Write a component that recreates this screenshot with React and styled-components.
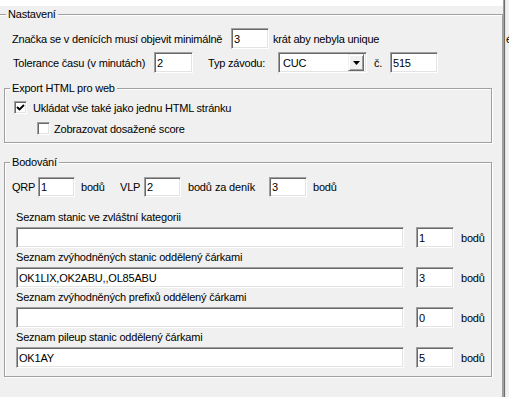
import React from "react";
import styled, { createGlobalStyle } from "styled-components";

const Global = createGlobalStyle`
  html, body { margin: 0; padding: 0; background: #f0f0f0; overflow: hidden; }
  body { font-family: "Liberation Sans", Arial, sans-serif; font-size: 11px; letter-spacing: -0.2px; color: #000; }
  #root { width: 509px; height: 397px; }
`;

const Page = styled.div`
  display: flex;
  width: 509px;
  height: 397px;
  overflow: hidden;
`;

const Main = styled.div`
  width: 503px;
  flex: none;
  display: flex;
  flex-direction: column;
  overflow: hidden;
`;

const TopStrip = styled.div`
  height: 6px;
  flex: none;
  background: #fff;
`;

const WindowEdge = styled.div`
  width: 3px;
  flex: none;
  background: linear-gradient(to right, #a0a0a0 0 1px, #6d6d6d 1px 2px, #e3e3e3 2px 3px);
`;

const Side = styled.div`
  flex: 1;
  overflow: hidden;
  padding-top: 33px;
  line-height: 13px;
`;

const SideGlyph = styled.span`
  display: block;
  width: 3px;
  overflow: hidden;
  white-space: nowrap;
`;

const Group = styled.fieldset`
  box-sizing: border-box;
  margin: ${(p) => p.$m || "0"};
  width: ${(p) => (p.$w ? `${p.$w}px` : "auto")};
  padding: ${(p) => p.$pad};
  border: 1px solid #a0a0a0;
  box-shadow: inset 1px 1px 0 #fff, 1px 1px 0 #fff;
  min-width: 0;
`;

const Legend = styled.legend`
  padding: 0 2px;
  margin-left: ${(p) => p.$x || 0}px;
  line-height: 13px;
  background: #f0f0f0;
`;

const Row = styled.div`
  display: flex;
  align-items: center;
  height: ${(p) => p.$h || 21}px;
  margin-left: ${(p) => p.$ml || 0}px;
  margin-top: ${(p) => p.$mt || 0}px;
`;

const Text = styled.span`
  flex: none;
  white-space: nowrap;
  width: ${(p) => (p.$w ? `${p.$w}px` : "auto")};
  margin-left: ${(p) => p.$ml || 0}px;
`;

const Field = styled.input`
  flex: none;
  box-sizing: border-box;
  width: ${(p) => p.$w}px;
  height: ${(p) => p.$h || 21}px;
  margin: 0 0 0 ${(p) => p.$ml || 0}px;
  padding: 0 0 0 2px;
  border: 1px solid;
  border-color: #a0a0a0 #fff #fff #a0a0a0;
  box-shadow: inset 1px 1px 0 #696969, inset -1px -1px 0 #e3e3e3;
  background: #fff;
  font: inherit;
  letter-spacing: inherit;
  color: #000;
  outline: none;
`;

const Combo = styled.div`
  flex: none;
  box-sizing: border-box;
  display: flex;
  align-items: center;
  width: ${(p) => p.$w}px;
  height: 21px;
  margin-left: ${(p) => p.$ml || 0}px;
  padding: 1px 2px 1px 4px;
  border: 1px solid;
  border-color: #a0a0a0 #fff #fff #a0a0a0;
  box-shadow: inset 1px 1px 0 #696969, inset -1px -1px 0 #e3e3e3;
  background: #fff;
`;

const ComboValue = styled.span`
  flex: 1;
`;

const DropButton = styled.div`
  box-sizing: border-box;
  width: 16px;
  height: 17px;
  display: flex;
  align-items: center;
  justify-content: center;
  background: #f0f0f0;
  border: 1px solid;
  border-color: #f0f0f0 #696969 #696969 #f0f0f0;
  box-shadow: inset 1px 1px 0 #fff, inset -1px -1px 0 #a0a0a0;
`;

const CheckRow = styled.label`
  display: flex;
  align-items: center;
  height: 13px;
  margin-left: ${(p) => p.$ml || 0}px;
  margin-top: ${(p) => p.$mt || 0}px;
`;

const Box = styled.span`
  flex: none;
  box-sizing: border-box;
  width: 13px;
  height: 13px;
  border: 1px solid;
  border-color: #a0a0a0 #fff #fff #a0a0a0;
  box-shadow: inset 1px 1px 0 #696969, inset -1px -1px 0 #e3e3e3;
  background: #fff;
  display: flex;
  align-items: center;
  justify-content: center;
  margin-right: ${(p) => p.$gap}px;
`;

const ListBlock = styled.div`
  margin-left: 4px;
`;

const ListLabel = styled.div`
  height: 19px;
  line-height: 19px;
  white-space: nowrap;
`;

const Spacer = styled.div`
  height: ${(p) => p.$h}px;
`;

const Check = ({ checked, gap, children, ml, mt }) => (
  <CheckRow $ml={ml} $mt={mt}>
    <Box $gap={gap}>
      {checked && (
        <svg width="9" height="9" viewBox="0 0 9 9">
          <path d="M1 4 L3.5 6.5 L8 2" fill="none" stroke="#000" strokeWidth="1.9" />
        </svg>
      )}
    </Box>
    {children}
  </CheckRow>
);

const lists = [
  { label: "Seznam stanic ve zvláštní kategorii", value: "", pts: "1" },
  { label: "Seznam zvýhodněných stanic oddělený čárkami", value: "OK1LIX,OK2ABU,,OL85ABU", pts: "3" },
  { label: "Seznam zvýhodněných prefixů oddělený čárkami", value: "", pts: "0" },
  { label: "Seznam pileup stanic oddělený čárkami", value: "OK1AY", pts: "5" },
];

export default function App() {
  return (
    <>
      <Global />
      <Page>
        <Main>
          <TopStrip />
          <Group $m="2px 0 0 -2px" $w={505} $pad="7px 10px 60px 5px">
            <Legend $x={2}>Nastavení</Legend>
            <Row $ml={8}>
              <Text $w={219}>Značka se v denících musí objevit minimálně</Text>
              <Field $w={38} defaultValue="3" />
              <Text $ml={4}>krát aby nebyla unique</Text>
            </Row>
            <Row $ml={9} $mt={3}>
              <Text $w={141}>Tolerance času (v minutách)</Text>
              <Field $w={39} defaultValue="2" />
              <Text $ml={15} $w={70}>Typ závodu:</Text>
              <Combo $w={89}>
                <ComboValue>CUC</ComboValue>
                <DropButton>
                  <svg width="7" height="4" viewBox="0 0 7 4">
                    <path d="M0 0 H7 L3.5 4 Z" fill="#000" />
                  </svg>
                </DropButton>
              </Combo>
              <Text $ml={7} $w={16}>č.</Text>
              <Field $w={48} defaultValue="515" />
            </Row>

            <Group $m="9px 0 0 0" $pad="6px 0 7px 9px">
              <Legend $x={-4}>Export HTML pro web</Legend>
              <Check checked gap={6}>Ukládat vše také jako jednu HTML stránku</Check>
              <Check gap={4} ml={23} mt={8}>Zobrazovat dosažené score</Check>
            </Group>

            <Group $m="13px 0 0 0" $pad="8px 0 8px 7px">
              <Legend $x={-2}>Bodování</Legend>
              <Row $h={20}>
                <Text $w={26}>QRP</Text>
                <Field $w={37} $h={20} defaultValue="1" />
                <Text $ml={6} $w={39}>bodů</Text>
                <Text $w={24}>VLP</Text>
                <Field $w={37} $h={20} defaultValue="2" />
                <Text $ml={7} $w={27}>bodů</Text>
                <Text $w={54}>za deník</Text>
                <Field $w={38} $h={20} defaultValue="3" />
                <Text $ml={6}>bodů</Text>
              </Row>
              <Spacer $h={11} />
              {lists.map((l) => (
                <ListBlock key={l.label}>
                  <ListLabel>{l.label}</ListLabel>
                  <Row>
                    <Field $w={388} defaultValue={l.value} />
                    <Field $w={38} $ml={12} defaultValue={l.pts} />
                    <Text $ml={7}>bodů</Text>
                  </Row>
                </ListBlock>
              ))}
            </Group>
          </Group>
        </Main>
        <WindowEdge />
        <Side>
          <SideGlyph>é</SideGlyph>
        </Side>
      </Page>
    </>
  );
}
